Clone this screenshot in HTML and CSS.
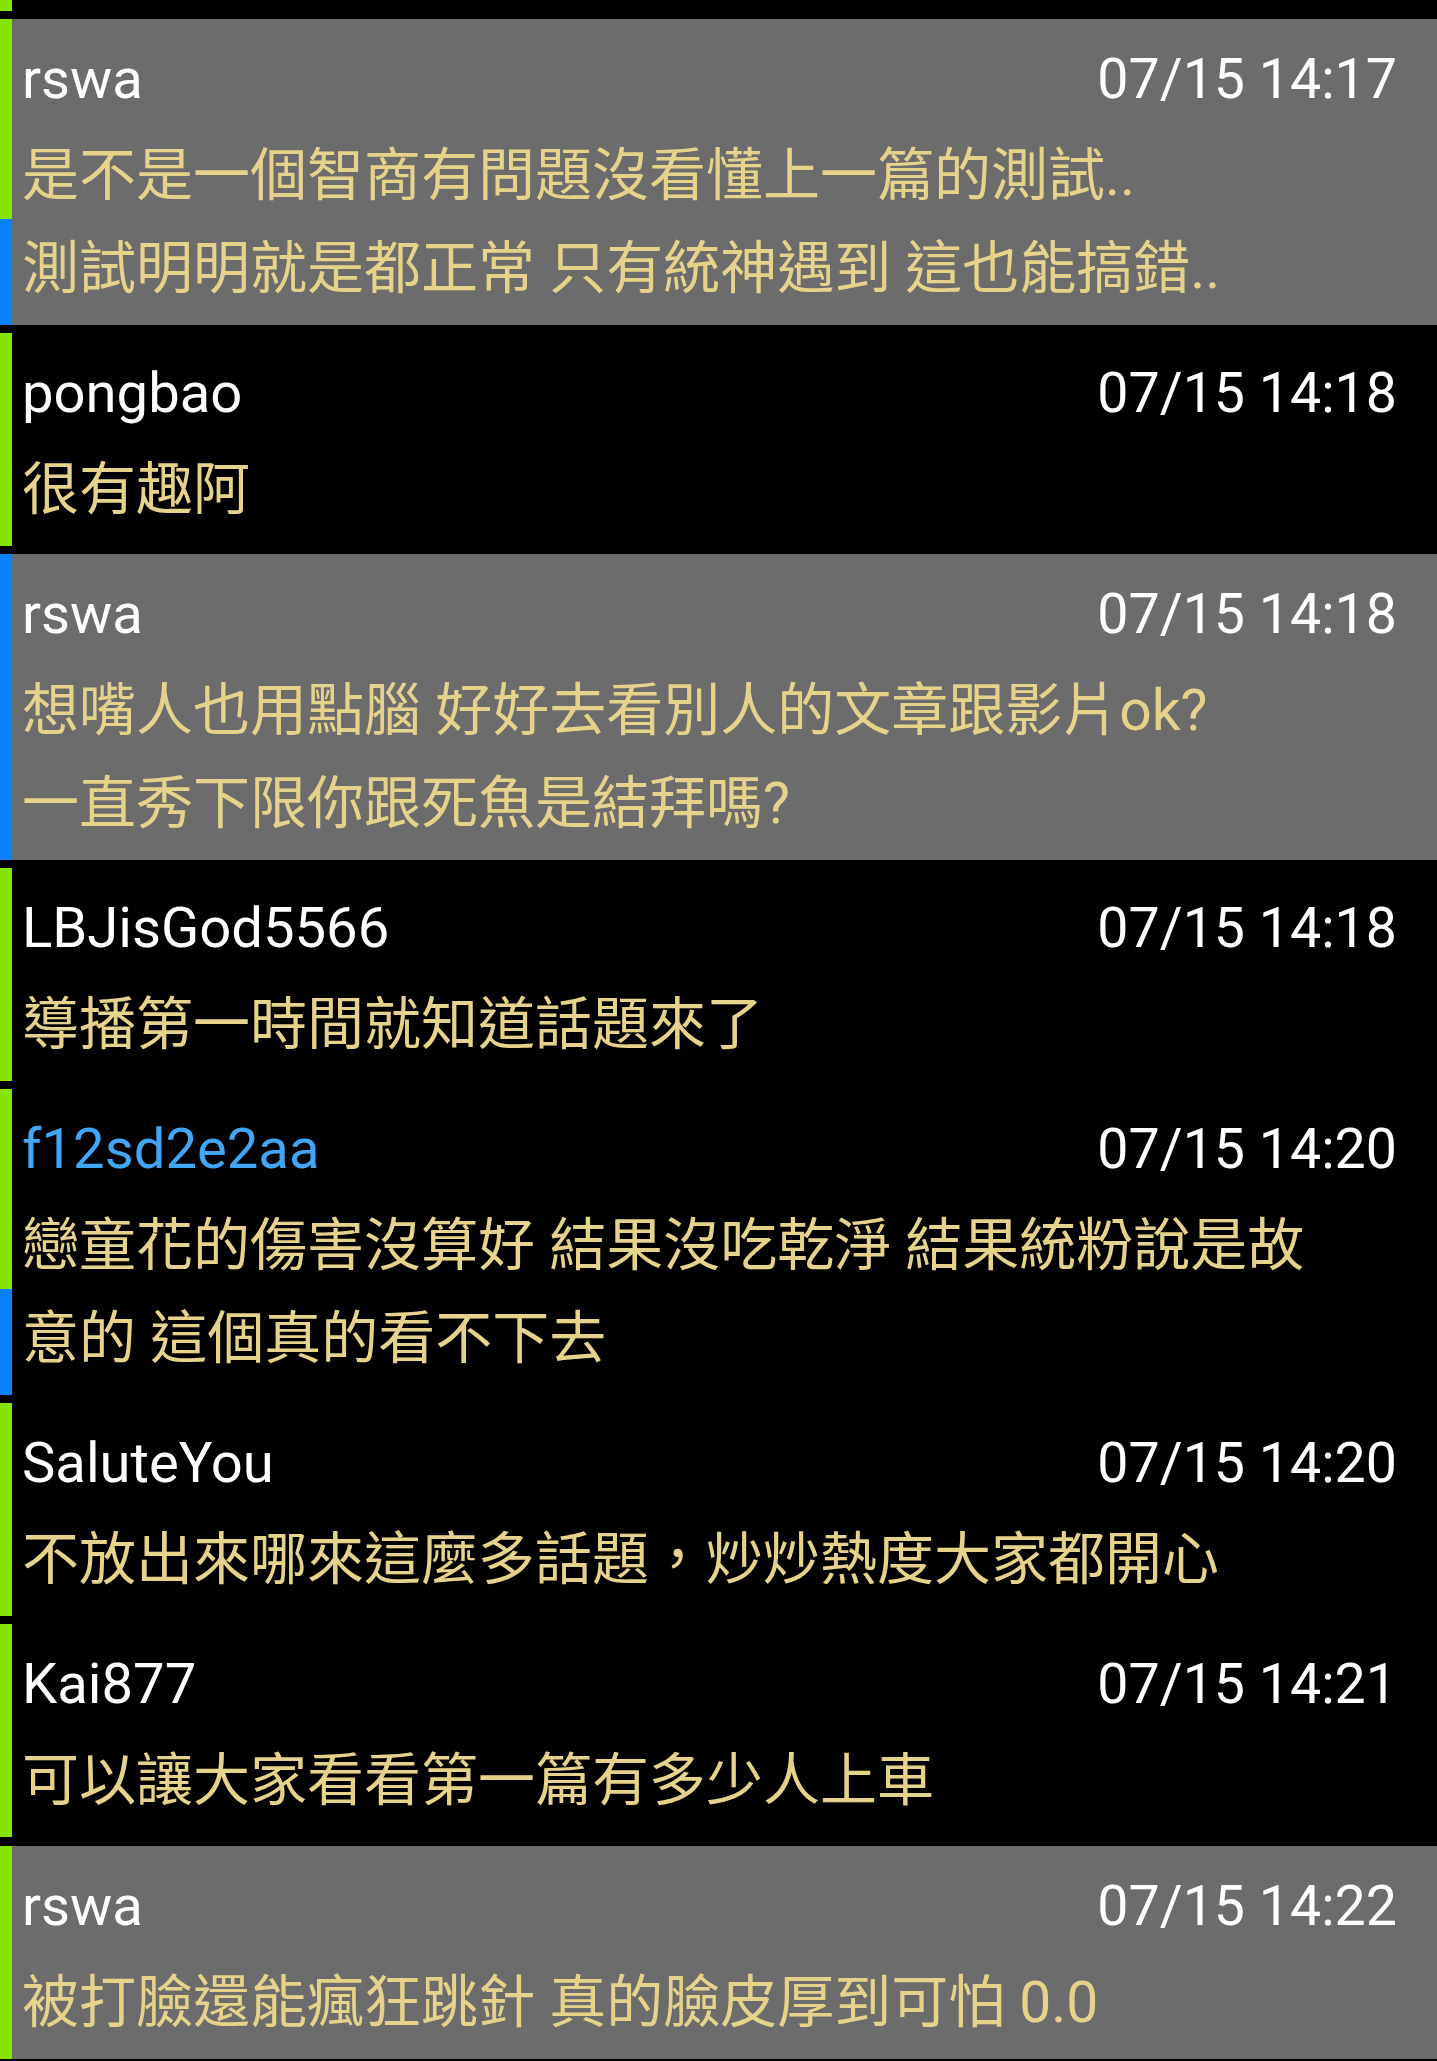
FILE: index.html
```html
<!DOCTYPE html>
<html lang="zh-Hant">
<head>
<meta charset="utf-8">
<title>Comments</title>
<link rel="stylesheet" href="styles.css">
</head>
<body>
<div class="list">
  <div class="row row--dark row--stub">
    <div class="strip"><span class="seg seg--green"></span></div>
  </div>

  <div class="row row--gray">
    <div class="strip"><span class="seg seg--green seg--top"></span><span class="seg seg--blue"></span></div>
    <div class="body">
      <div class="head"><span class="name">rswa</span><span class="time">07/15 14:17</span></div>
      <div class="text">是不是一個智商有問題沒看懂上一篇的測試..<br>測試明明就是都正常 只有統神遇到 這也能搞錯..</div>
    </div>
  </div>

  <div class="row row--dark">
    <div class="strip"><span class="seg seg--green"></span></div>
    <div class="body">
      <div class="head"><span class="name">pongbao</span><span class="time">07/15 14:18</span></div>
      <div class="text">很有趣阿</div>
    </div>
  </div>

  <div class="row row--gray">
    <div class="strip"><span class="seg seg--blue"></span></div>
    <div class="body">
      <div class="head"><span class="name">rswa</span><span class="time">07/15 14:18</span></div>
      <div class="text">想嘴人也用點腦 好好去看別人的文章跟影片ok?<br>一直秀下限你跟死魚是結拜嗎?</div>
    </div>
  </div>

  <div class="row row--dark">
    <div class="strip"><span class="seg seg--green"></span></div>
    <div class="body">
      <div class="head"><span class="name">LBJisGod5566</span><span class="time">07/15 14:18</span></div>
      <div class="text">導播第一時間就知道話題來了</div>
    </div>
  </div>

  <div class="row row--dark">
    <div class="strip"><span class="seg seg--green seg--top"></span><span class="seg seg--blue"></span></div>
    <div class="body">
      <div class="head"><span class="name name--blue">f12sd2e2aa</span><span class="time">07/15 14:20</span></div>
      <div class="text">戀童花的傷害沒算好 結果沒吃乾淨 結果統粉說是故意的 這個真的看不下去</div>
    </div>
  </div>

  <div class="row row--dark">
    <div class="strip"><span class="seg seg--green"></span></div>
    <div class="body">
      <div class="head"><span class="name">SaluteYou</span><span class="time">07/15 14:20</span></div>
      <div class="text">不放出來哪來這麼多話題，炒炒熱度大家都開心</div>
    </div>
  </div>

  <div class="row row--dark">
    <div class="strip"><span class="seg seg--green"></span></div>
    <div class="body">
      <div class="head"><span class="name">Kai877</span><span class="time">07/15 14:21</span></div>
      <div class="text">可以讓大家看看第一篇有多少人上車</div>
    </div>
  </div>

  <div class="row row--gray">
    <div class="strip"><span class="seg seg--green"></span></div>
    <div class="body">
      <div class="head"><span class="name">rswa</span><span class="time">07/15 14:22</span></div>
      <div class="text">被打臉還能瘋狂跳針 真的臉皮厚到可怕 0.0</div>
    </div>
  </div>
</div>
</body>
</html>
```

FILE: styles.css
```css
html, body {
  margin: 0;
  padding: 0;
  background: #000;
}

body {
  width: 1437px;
  font-family: Roboto, "Noto Sans CJK TC", sans-serif;
  font-size: 57px;
}

.list {
  display: flex;
  flex-direction: column;
  gap: 8.25px;
}

.row {
  display: flex;
}

.row--dark {
  background: #000;
}

.row--gray {
  background: #6c6c6c;
}

.row--stub {
  height: 11px;
}

.strip {
  width: 12px;
  flex-shrink: 0;
  display: flex;
  flex-direction: column;
}

.seg {
  flex: 1 1 auto;
  display: block;
}

.seg--top {
  flex: 0 0 200px;
}

.seg--green {
  background: #84e600;
}

.seg--blue {
  background: #0a80fc;
}

.body {
  flex: 1;
  min-width: 0;
  padding: 10px 40px 9.5px 10px;
}

.head {
  display: flex;
  justify-content: space-between;
  align-items: baseline;
  font-size: 55.5px;
  line-height: 101px;
  white-space: nowrap;
}

.name {
  color: #ffffff;
  font-size: 56.2px;
}

.name--blue {
  color: #42a5f5;
}

.time {
  color: #ffffff;
}

.text {
  color: #e6d38b;
  line-height: 92.5px;
  padding-right: 60px;
}
```
